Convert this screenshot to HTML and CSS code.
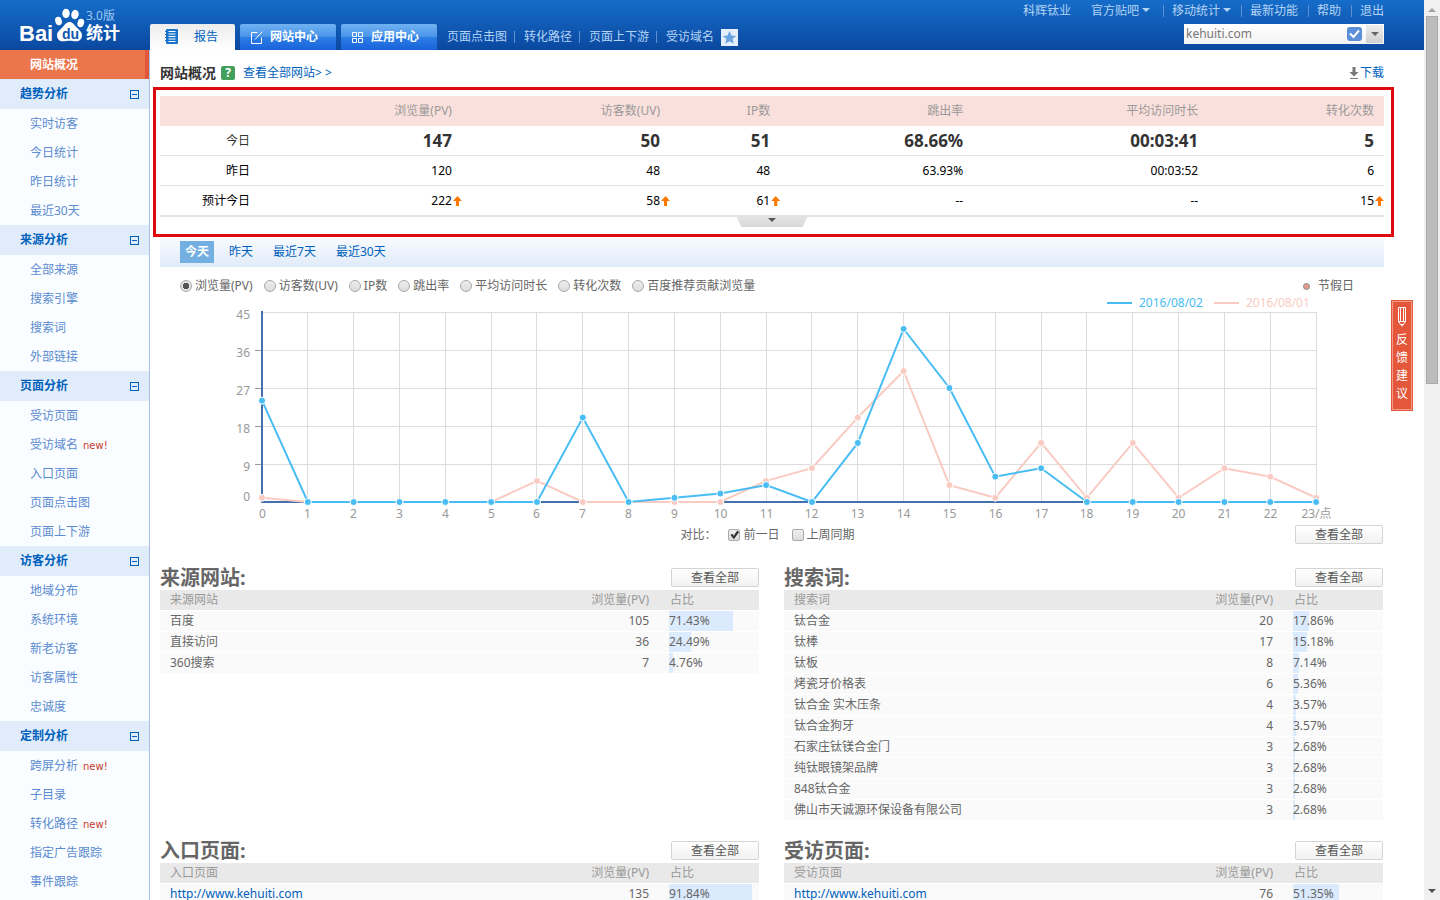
FILE: index.html
```html
<!DOCTYPE html>
<html lang="zh-CN">
<head>
<meta charset="utf-8">
<title>百度统计 - 网站概况</title>
<link rel="stylesheet" href="styles.css">
</head>
<body>
<div class="app">
  <header class="header">
    <a class="logo" href="#" aria-label="百度统计">
      <svg width="150" height="50" viewBox="0 0 150 50">
        <g fill="#fff">
          <text class="logo-latin" x="19" y="41">Bai</text>
          <ellipse cx="66" cy="13.500" rx="3.700" ry="4.700"/>
          <ellipse cx="75" cy="14.500" rx="3.700" ry="4.700" transform="rotate(12 75 14.500)"/>
          <ellipse cx="58.500" cy="21" rx="3.300" ry="4.300" transform="rotate(-15 58.500 21)"/>
          <ellipse cx="80.800" cy="23" rx="3.300" ry="4.300" transform="rotate(15 80.800 23)"/>
          <path d="M69.500 22c3 0 4.500 2.500 6.500 4.800 2.500 2.700 6 4.800 6 8.700 0 3.500-2.500 5.800-6 5.800-2.200 0-4-.6-6.500-.6s-4 .6-6.500.6c-3.500 0-6-2.300-6-5.800 0-3.900 3.500-6 6-8.700 2-2.300 3.500-4.800 6.500-4.800z"/>
          <text class="logo-cn" x="86" y="39">统计</text>
        </g>
        <text class="logo-du" x="62" y="39">du</text>
        <text class="logo-version" x="86" y="20">3.0版</text>
      </svg>
    </a>
    <nav class="tabs">
      <a class="tab tab-active" href="#">
        <svg width="14" height="16" viewBox="0 0 14 16"><rect x="1" width="12" height="15" rx="1" fill="#1a74cb"/><path d="M0 2.500h2M0 5.500h2M0 8.500h2M0 11.500h2" stroke="#1a74cb"/><path d="M3.500 2.500h7M3.500 5h7M3.500 7.500h7M3.500 10h7M3.500 12.500h7" stroke="#fff"/></svg>
        报告
      </a>
      <a class="tab" href="#">
        <svg width="13" height="13" viewBox="0 0 13 13" fill="none" stroke="#fff"><path d="M7.500 1.500h-6v11h10V6.500M5 8.500L12.500.5"/></svg>
        网站中心
      </a>
      <a class="tab" href="#">
        <svg width="13" height="13" viewBox="0 0 13 13" fill="none" stroke="#fff"><path d="M1.500 1.500h4v4h-4zM7.500 1.500h4v4h-4zM1.500 7.500h4v4h-4zM7.500 7.500h4v4h-4z"/></svg>
        应用中心
      </a>
    </nav>
    <nav class="quick">
      <a href="#">页面点击图</a><a href="#">转化路径</a><a href="#">页面上下游</a><a href="#">受访域名</a>
      <button class="star" aria-label="收藏"><svg width="17" height="17" viewBox="0 0 17 17"><path d="M8.500 2l2 4.500 4.700.4-3.600 3.200 1.200 4.700-4.300-2.500-4.300 2.500 1.200-4.700L1.800 6.900l4.700-.4z" fill="#6ba4e0"/></svg></button>
    </nav>
    <div class="account">
      <nav class="account-links">
        <a class="user" href="#">科辉钛业</a>
        <a class="forum" href="#">官方贴吧<i class="caret"></i></a>
        <a class="split" href="#">移动统计<i class="caret"></i></a>
        <a class="split" href="#">最新功能</a>
        <a class="split" href="#">帮助</a>
        <a class="split" href="#">退出</a>
      </nav>
      <div class="site">
        <input type="text" value="kehuiti.com" aria-label="网站">
        <svg width="15" height="14" viewBox="0 0 15 14"><rect width="15" height="14" rx="3" fill="#5b8fd9"/><path d="M3 6.500l3.500 3.500L12 3.500" fill="none" stroke="#fff" stroke-width="2"/></svg>
        <button aria-label="选择网站"><i class="caret"></i></button>
      </div>
    </div>
  </header>
  <div class="body">
    <aside class="sidebar">
      <a class="overview" href="#">网站概况</a>
      <h3>趋势分析<button class="fold" aria-label="收起"></button></h3>
      <a href="#">实时访客</a><a href="#">今日统计</a><a href="#">昨日统计</a><a href="#">最近30天</a>
      <h3>来源分析<button class="fold" aria-label="收起"></button></h3>
      <a href="#">全部来源</a><a href="#">搜索引擎</a><a href="#">搜索词</a><a href="#">外部链接</a>
      <h3>页面分析<button class="fold" aria-label="收起"></button></h3>
      <a href="#">受访页面</a><a href="#">受访域名<em>new!</em></a><a href="#">入口页面</a><a href="#">页面点击图</a><a href="#">页面上下游</a>
      <h3>访客分析<button class="fold" aria-label="收起"></button></h3>
      <a href="#">地域分布</a><a href="#">系统环境</a><a href="#">新老访客</a><a href="#">访客属性</a><a href="#">忠诚度</a>
      <h3>定制分析<button class="fold" aria-label="收起"></button></h3>
      <a href="#">跨屏分析<em>new!</em></a><a href="#">子目录</a><a href="#">转化路径<em>new!</em></a><a href="#">指定广告跟踪</a><a href="#">事件跟踪</a>
    </aside>
    <main class="main">
      <div class="title">
        <h1>网站概况</h1>
        <button class="help" aria-label="帮助">?</button>
        <a href="#">查看全部网站&gt; &gt;</a>
        <a class="download" href="#"><svg width="10" height="12" viewBox="0 0 10 12"><path d="M3.500 0h3v5H9.500L5 9.500.5 5h3zM1 11h8v1H1z" fill="#777"/></svg>下载</a>
      </div>

      <section class="summary">
        <table>
          <colgroup><col class="c1"><col class="c2"><col class="c3"><col class="c4"><col class="c5"><col class="c6"><col class="c7"></colgroup>
          <thead><tr><th></th><th>浏览量(PV)</th><th>访客数(UV)</th><th>IP数</th><th>跳出率</th><th>平均访问时长</th><th>转化次数</th></tr></thead>
          <tbody>
            <tr class="today"><td>今日</td><td>147</td><td>50</td><td>51</td><td>68.66%</td><td>00:03:41</td><td>5</td></tr>
            <tr><td>昨日</td><td>120</td><td>48</td><td>48</td><td>63.93%</td><td>00:03:52</td><td>6</td></tr>
            <tr><td>预计今日</td><td class="up">222</td><td class="up">58</td><td class="up">61</td><td>--</td><td>--</td><td class="up">15</td></tr>
          </tbody>
        </table>
        <button class="more" aria-label="展开"><i class="caret"></i></button>
      </section>

      <nav class="range">
        <a class="on" href="#">今天</a><a href="#">昨天</a><a href="#">最近7天</a><a href="#">最近30天</a>
      </nav>

      <div class="metrics">
        <label><input type="radio" name="m" checked>浏览量(PV)</label>
        <label><input type="radio" name="m">访客数(UV)</label>
        <label><input type="radio" name="m">IP数</label>
        <label><input type="radio" name="m">跳出率</label>
        <label><input type="radio" name="m">平均访问时长</label>
        <label><input type="radio" name="m">转化次数</label>
        <label><input type="radio" name="m">百度推荐贡献浏览量</label>
        <span class="holiday"><i></i>节假日</span>
      </div>

      <svg class="chart" id="chart" viewBox="0 0 1224 226" role="img" aria-label="浏览量趋势"></svg>

      <div class="compare">
        <div class="compare-options">
          <span>对比：</span>
          <label><input type="checkbox" checked>前一日</label>
          <label><input type="checkbox">上周同期</label>
        </div>
        <button class="btn">查看全部</button>
      </div>

      <div class="panels">
        <section class="panel">
          <div class="panel-head"><h2>来源网站:</h2><button class="btn">查看全部</button></div>
          <table>
            <thead><tr><th>来源网站</th><th class="num">浏览量(PV)</th><th class="rate">占比</th></tr></thead>
            <tbody>
              <tr><td>百度</td><td class="num">105</td><td class="rate"><div class="bar" style="width:71.43%">71.43%</div></td></tr>
              <tr><td>直接访问</td><td class="num">36</td><td class="rate"><div class="bar" style="width:24.49%">24.49%</div></td></tr>
              <tr><td>360搜索</td><td class="num">7</td><td class="rate"><div class="bar" style="width:4.76%">4.76%</div></td></tr>
            </tbody>
          </table>
        </section>
        <section class="panel">
          <div class="panel-head"><h2>搜索词:</h2><button class="btn">查看全部</button></div>
          <table>
            <thead><tr><th>搜索词</th><th class="num">浏览量(PV)</th><th class="rate">占比</th></tr></thead>
            <tbody>
              <tr><td>钛合金</td><td class="num">20</td><td class="rate"><div class="bar" style="width:17.86%">17.86%</div></td></tr>
              <tr><td>钛棒</td><td class="num">17</td><td class="rate"><div class="bar" style="width:15.18%">15.18%</div></td></tr>
              <tr><td>钛板</td><td class="num">8</td><td class="rate"><div class="bar" style="width:7.14%">7.14%</div></td></tr>
              <tr><td>烤瓷牙价格表</td><td class="num">6</td><td class="rate"><div class="bar" style="width:5.36%">5.36%</div></td></tr>
              <tr><td>钛合金 实木压条</td><td class="num">4</td><td class="rate"><div class="bar" style="width:3.57%">3.57%</div></td></tr>
              <tr><td>钛合金狗牙</td><td class="num">4</td><td class="rate"><div class="bar" style="width:3.57%">3.57%</div></td></tr>
              <tr><td>石家庄钛镁合金门</td><td class="num">3</td><td class="rate"><div class="bar" style="width:2.68%">2.68%</div></td></tr>
              <tr><td>纯钛眼镜架品牌</td><td class="num">3</td><td class="rate"><div class="bar" style="width:2.68%">2.68%</div></td></tr>
              <tr><td>848钛合金</td><td class="num">3</td><td class="rate"><div class="bar" style="width:2.68%">2.68%</div></td></tr>
              <tr><td>佛山市天诚源环保设备有限公司</td><td class="num">3</td><td class="rate"><div class="bar" style="width:2.68%">2.68%</div></td></tr>
            </tbody>
          </table>
        </section>
        <section class="panel">
          <div class="panel-head"><h2>入口页面:</h2><button class="btn">查看全部</button></div>
          <table>
            <thead><tr><th>入口页面</th><th class="num">浏览量(PV)</th><th class="rate">占比</th></tr></thead>
            <tbody><tr><td><a href="#">http://www.kehuiti.com</a></td><td class="num">135</td><td class="rate"><div class="bar" style="width:91.84%">91.84%</div></td></tr></tbody>
          </table>
        </section>
        <section class="panel">
          <div class="panel-head"><h2>受访页面:</h2><button class="btn">查看全部</button></div>
          <table>
            <thead><tr><th>受访页面</th><th class="num">浏览量(PV)</th><th class="rate">占比</th></tr></thead>
            <tbody><tr><td><a href="#">http://www.kehuiti.com</a></td><td class="num">76</td><td class="rate"><div class="bar" style="width:51.35%">51.35%</div></td></tr></tbody>
          </table>
        </section>
      </div>
    </main>
  </div>
</div>
<div class="scrollbar"><i class="arrow-up"></i><div class="thumb"></div><i class="arrow-down"></i></div>
<button class="feedback">
  <svg width="10" height="20" viewBox="0 0 10 20" fill="none" stroke="#fff"><path d="M1.500.5h7v14h-7zM3.500 1v13M6.500 1v13M1.500 14.500l2 3h3l2-3"/><path d="M3.500 17h3L5 20z" fill="#fff" stroke="none"/></svg>
  <span>反</span><span>馈</span><span>建</span><span>议</span>
</button>
<script src="chart.js"></script>
</body>
</html>
```
FILE: styles.css
```css
* { box-sizing: border-box; }
body {
  margin: 0;
  height: 100vh;
  overflow: hidden;
  display: flex;
  position: relative;
  background: #fff;
  color: #666;
  font: 12px/20px "Noto Sans", "Noto Sans CJK SC", sans-serif;
}
a { color: #0061bd; text-decoration: none; }
h1, h2, h3 { margin: 0; }
button { font: inherit; padding: 0; border: 0; cursor: pointer; }
input { margin: 0; }
i, em { font-style: normal; }
svg { flex: none; }
.caret {
  display: inline-block;
  border: 4px solid transparent;
  border-top-color: currentColor;
  border-bottom: 0;
}

.app { flex: 1; min-width: 0; display: flex; flex-direction: column; }

/* header */
.header {
  height: 50px;
  flex: none;
  display: flex;
  align-items: flex-end;
  background: linear-gradient(#156dc9, #0b48a0);
}
.logo { width: 150px; height: 50px; flex: none; }
.logo-latin { font: bold 22px "Liberation Sans", sans-serif; }
.logo-cn { font: bold 17px "Noto Sans CJK SC", sans-serif; }
.logo-du { font: bold 14px "Liberation Sans", sans-serif; fill: #0f56b0; }
.logo-version { font: 12px "Noto Sans", "Noto Sans CJK SC", sans-serif; fill: #9cc8f4; }
.tabs { display: flex; gap: 5px; }
.tab {
  height: 26px;
  padding: 0 18px 0 10px;
  display: flex;
  align-items: center;
  gap: 7px;
  border-radius: 2px 2px 0 0;
  color: #fff;
  font-weight: bold;
  background: linear-gradient(#70b1f1, #4a95ea 48%, #2b7de4 52%, #1a62dc);
}
.tab-active {
  padding: 0 17px 0 15px;
  gap: 15px;
  color: #0061bd;
  font-weight: normal;
  background: linear-gradient(#ececec, #fff);
}
.quick { display: flex; align-items: center; height: 26px; padding-left: 2px; }
.quick a { color: #b4d4f5; padding: 0 7px 0 8px; line-height: 12px; border-right: 1px solid #5d93d4; white-space: nowrap; }
.quick a + a { padding-left: 9px; }
.quick a:last-of-type { border: 0; }
.star { width: 17px; height: 17px; background: #e4effb; display: flex; }
.account {
  margin-left: auto;
  padding-right: 40px;
  height: 50px;
  display: flex;
  flex-direction: column;
  align-items: flex-end;
}
.account-links { display: flex; align-items: center; height: 24px; padding-bottom: 2px; white-space: nowrap; }
.account-links a { color: #b4d4f5; line-height: 12px; }
.account-links .caret { margin: 0 0 3px 3px; }
.user { margin-right: 20px; }
.forum { margin-right: 13px; }
.split { border-left: 1px solid #5d93d4; padding: 0 10px 0 8px; }
.split:last-child { padding-right: 0; }
.site {
  width: 200px;
  height: 20px;
  padding-right: 1px;
  display: flex;
  align-items: center;
  background: linear-gradient(#fff, #f3f3f3);
}
.site input { flex: 1; min-width: 0; border: 0; padding: 0 2px; background: none; color: #777; font: inherit; outline: 0; }
.site svg { margin-right: 4px; }
.site button { width: 17px; height: 18px; background: linear-gradient(#eee, #d0d0d0); color: #666; display: grid; place-items: center; }

/* sidebar */
.body { flex: 1; min-height: 0; display: flex; }
.sidebar { width: 150px; flex: none; background: #fafdff; border-right: 1px solid #a9c1ea; }
.sidebar a { display: block; height: 29px; line-height: 29px; padding-left: 30px; color: #5b8bd0; }
.sidebar .overview { background: #ec764c; color: #fff; font-weight: bold; border-right: 4px solid #e2573a; }
.sidebar h3 {
  height: 30px;
  padding: 0 10px 0 20px;
  display: flex;
  align-items: center;
  justify-content: space-between;
  background: #e1ecfa;
  color: #0061bd;
  font-size: 12px;
}
.sidebar em { margin-left: 5px; color: #c8372d; font: 10px "DejaVu Sans", sans-serif; }
.fold { width: 9px; height: 9px; border: 1px solid #0061bd; background: linear-gradient(#0061bd, #0061bd) center / 5px 1px no-repeat; }

/* main column */
.main { flex: 1; min-width: 0; padding: 0 40px 0 10px; overflow: hidden; }
.title { height: 37px; padding-top: 8px; display: flex; align-items: center; }
.title h1 { font-size: 14px; color: #333; margin-right: 5px; }
.help { width: 14px; height: 14px; margin-right: 8px; border-radius: 2px; background: #43a05c; color: #fff; font-weight: bold; line-height: 14px; }
.download { margin-left: auto; display: flex; align-items: center; gap: 1px; }

.summary { position: relative; margin: 0 -10px 0 -7px; padding: 6px 7px 17px 4px; border: 3px solid #e0090b; }
.summary table { width: 100%; border-collapse: separate; border-spacing: 0; table-layout: fixed; border-bottom: 1px solid #e2e2e2; }
.c1 { width: 8.170%; }
.c2 { width: 16.500%; }
.c3 { width: 17%; }
.c4 { width: 9%; }
.c5 { width: 15.770%; }
.c6 { width: 19.200%; }
.c7 { width: 14.360%; }
.summary th, .summary td { height: 30px; padding: 0 10px 0 0; text-align: right; }
.summary th { background: #fae0dc; color: #999; font-weight: normal; }
.summary td { position: relative; color: #000; border-bottom: 1px solid #e2e2e2; }
.summary .today td { color: #333; font-size: 17px; font-weight: bold; }
.summary .today td:first-child { font-size: 12px; font-weight: normal; }
.up::after {
  content: "";
  position: absolute;
  right: 0;
  top: 10px;
  width: 9px;
  height: 10px;
  background: #ff7800;
  clip-path: polygon(50% 0, 100% 50%, 67% 50%, 67% 100%, 33% 100%, 33% 50%, 0 50%);
}
.more {
  position: absolute;
  left: calc(50% - 37px);
  bottom: 7px;
  width: 71px;
  height: 10px;
  background: linear-gradient(#e4e4e4, #d8d8d8);
  clip-path: polygon(0 0, 100% 0, 66px 100%, 5px 100%);
  color: #555;
  line-height: 0;
}
.more .caret { margin-bottom: 4px; }

.range {
  height: 30px;
  padding-left: 20px;
  display: flex;
  align-items: center;
  gap: 10px;
  background: linear-gradient(#f9fbff, #e0ebf9);
}
.range a { padding: 0 5px; line-height: 22px; }
.range .on { background: #73afe1; color: #fff; font-weight: bold; }

.metrics { display: flex; align-items: center; gap: 11px; height: 30px; padding: 8px 30px 0 20px; white-space: nowrap; }
label { display: inline-flex; align-items: center; gap: 3px; }
input[type=radio], input[type=checkbox] {
  appearance: none;
  width: 12px;
  height: 12px;
  border: 1px solid #a9a9a9;
  background: linear-gradient(#eee, #dcdcdc);
}
input[type=radio] { border-radius: 50%; }
input[type=radio]:checked { background: radial-gradient(circle, #555 0 3px, #e4e4e4 3px); }
input[type=checkbox] { border-radius: 2px; }
input[type=checkbox]:checked::after {
  content: "";
  display: block;
  height: 10px;
  background: #333;
  clip-path: polygon(10% 50%, 28% 38%, 42% 58%, 76% 8%, 96% 20%, 44% 92%);
}
.holiday { margin-left: auto; display: flex; align-items: center; gap: 8px; }
.holiday i { width: 7px; height: 7px; border-radius: 50%; border: 1px solid #888; background: #e59c8e; }

.chart { display: block; width: 100%; height: auto; overflow: visible; font-size: 12px; }
.grid { stroke: #ddd; fill: none; }
.axis { stroke: #4470ad; stroke-width: 2; fill: none; }
.tick { stroke: #999; }
.chart-label { fill: #999; }
.line { fill: none; stroke-width: 2; }
.dot { stroke: #fff; stroke-width: 1; }

.compare { display: grid; grid-template-columns: 1fr auto 1fr; align-items: start; height: 24px; margin: 0 1px 19px 0; padding-top: 2px; }
.compare-options { grid-column: 2; display: flex; gap: 12px; padding-right: 8px; }
.compare .btn { grid-column: 3; justify-self: end; }
.btn {
  width: 88px;
  height: 19px;
  border: 1px solid #d4d4d4;
  border-radius: 2px;
  background: linear-gradient(#fff, #f2f2f2);
  color: #555;
  line-height: 17px;
}

.panels { display: grid; grid-template-columns: 1fr 1fr; gap: 19px 25px; margin-right: 1px; }
.panel-head { height: 24px; display: flex; align-items: flex-start; justify-content: space-between; }
.panel-head h2 { font-size: 20px; line-height: 24px; }
.panel-head .btn { margin-top: 2px; }
.panel table { width: 100%; border-collapse: separate; border-spacing: 0; table-layout: fixed; }
.panel th, .panel td { padding: 0 0 0 10px; text-align: left; }
.panel th { height: 20px; background: #e9e9e9; color: #999; font-weight: normal; }
.panel td { height: 21px; border-top: 1px solid #fff; background: #fafafa; }
.panel .num { width: 140px; padding: 0 20px 0 0; text-align: right; }
.panel .rate { width: 90px; padding: 0; }
.panel th.rate { padding-left: 1px; }
.bar { background: #dceafd; white-space: nowrap; }

/* window scrollbar */
.scrollbar { width: 16px; flex: none; background: #f0f0f0; display: flex; flex-direction: column; align-items: center; padding: 8px 0 7px; }
.arrow-up { border: 4px solid transparent; border-top: 0; border-bottom-color: #a3a3a3; margin-bottom: 4px; }
.thumb { width: 12px; height: 41.600%; background: #bcbcbc; border: 1px solid #a8a8a8; }
.arrow-down { margin-top: auto; border: 4px solid transparent; border-bottom: 0; border-top-color: #505050; }

.feedback {
  position: absolute;
  top: 300px;
  right: 27px;
  width: 22px;
  height: 111px;
  padding-top: 7px;
  display: flex;
  flex-direction: column;
  align-items: center;
  background: #e4573a;
  outline: 1px solid #f19b88;
  outline-offset: -2px;
  color: #fff;
  line-height: 18px;
}
.feedback svg { margin-bottom: 4px; }
```
FILE: chart.js
```javascript
(function () {
  var NS = "http://www.w3.org/2000/svg";
  var svg = document.getElementById("chart");
  var left = 102, step = 45.83, base = 205, unit = 4.222;
  var today = [24,0,0,0,0,0,0,20,0,1,2,4,0,14,41,27,6,8,0,0,0,0,0,0];
  var yesterday = [1,0,0,0,0,0,5,0,0,0,0,5,8,20,31,4,1,14,1,14,1,8,6,1];

  function add(name, attrs, text) {
    var el = document.createElementNS(NS, name);
    for (var k in attrs) el.setAttribute(k, attrs[k]);
    if (text !== undefined) el.textContent = text;
    svg.appendChild(el);
  }
  function x(i) { return left + step * i; }
  function y(v) { return base - unit * v; }
  function label(px, py, anchor, text, color) {
    var a = { x: px, y: py, "text-anchor": anchor, "class": "chart-label" };
    if (color) a.style = "fill:" + color;
    add("text", a, text);
  }

  for (var v = 9; v <= 45; v += 9) {
    var gy = Math.round(y(v)) + 0.5;
    add("path", { d: "M" + left + " " + gy + "H1156", "class": "grid" });
    if (v < 45) add("path", { d: "M95 " + gy + "H102", "class": "tick" });
    label(90, gy + 6, "end", v);
  }
  label(90, 204, "end", 0);
  for (var i = 0; i < 24; i++) {
    var gx = Math.floor(x(i)) + 0.5;
    add("path", { d: "M" + gx + " 15V205", "class": "grid" });
    label(gx, 221, "middle", i === 23 ? "23/点" : i);
  }
  add("path", { d: "M102 14V205H1156", "class": "axis" });

  function series(data, color) {
    var pts = data.map(function (d, n) { return x(n) + "," + y(d); });
    add("polyline", { points: pts.join(" "), "class": "line", stroke: color });
    data.forEach(function (d, n) {
      add("circle", { cx: x(n), cy: y(d), r: 3.5, fill: color, "class": "dot" });
    });
  }
  series(yesterday, "#f9cbc3");
  series(today, "#49bdf3");

  add("path", { d: "M947 6H972", stroke: "#49bdf3", "class": "line" });
  label(979, 10, "start", "2016/08/02", "#49bdf3");
  add("path", { d: "M1054 6H1079", stroke: "#f9cbc3", "class": "line" });
  label(1086, 10, "start", "2016/08/01", "#f9cbc3");
})();
```
